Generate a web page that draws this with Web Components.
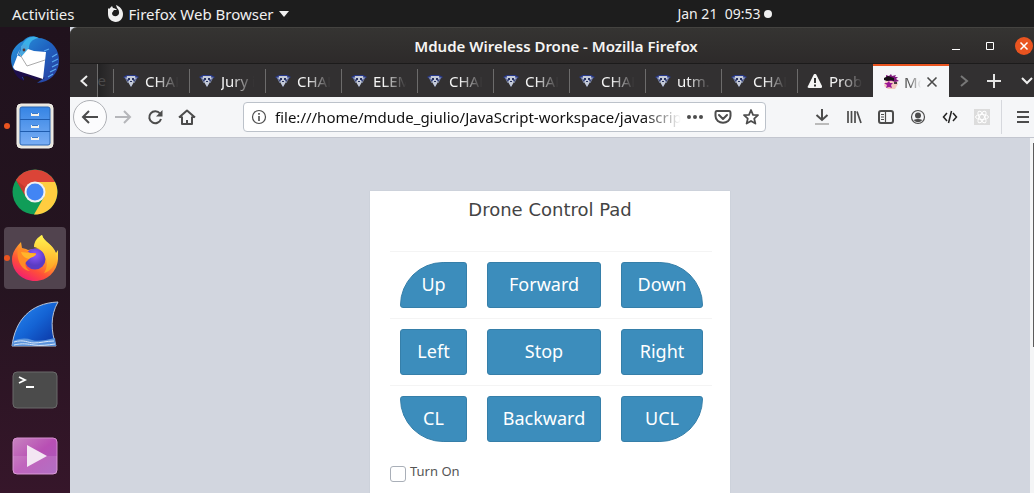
<!DOCTYPE html>
<html lang="en">
<head>
<meta charset="utf-8">
<title>Mdude Wireless Drone</title>
<style>
  html, body { margin: 0; height: 100%; }
  body { font: 15px/20px "Noto Sans", "Open Sans", sans-serif; overflow: hidden; }
</style>
</head>
<body>
<desktop-shell>
  <top-bar slot="top"></top-bar>
  <app-dock slot="dock"></app-dock>
  <browser-window>
    <drone-pad></drone-pad>
  </browser-window>
</desktop-shell>

<script>
const define = (name, html, setup) => {
  const template = document.createElement('template');
  template.innerHTML = html;
  customElements.define(name, class extends HTMLElement {
    connectedCallback() {
      if (this.shadowRoot) return;
      const root = this.attachShadow({ mode: 'open' });
      root.append(template.content.cloneNode(true));
      if (setup) setup(this, root);
    }
  });
};

define('desktop-shell', `
<style>
  :host { display: flex; flex-direction: column; height: 100vh; background: #24131f; }
  .main { flex: 1; display: flex; min-height: 0; }
</style>
<slot name="top"></slot>
<div class="main"><slot name="dock"></slot><slot></slot></div>`);

define('top-bar', `
<style>
  :host { display: grid; grid-template-columns: 8fr auto 3fr; align-items: center; height: 27px; padding: 0 12px;
    background: #1d1d1d; color: #f0f0f0; }
  nav { display: flex; align-items: center; gap: 32px; }
  button { all: unset; display: flex; align-items: center; white-space: pre; }
  .app { gap: 5px; }
  .clock { gap: 4px; font-size: 14px; }
</style>
<nav>
  <button>Activities</button>
  <button class="app">
    <svg width="17" height="17" viewBox="0 0 17 17" fill="#f0f0f0"><path fill-rule="evenodd" d="M1 3l1 1 3-3 1 2c2 0 3 1 4 2H7l-2 3c0 5 8 4 7-1 0-2-1-3-2-4L9 0c3 1 7 4 7 9 0 11-15 10-15 0z"/></svg>
    <span>Firefox Web Browser</span>
    <svg width="10" height="6" fill="#f0f0f0"><path d="M0 0h10L5 6z"/></svg>
  </button>
</nav>
<button class="clock">Jan 21  09:53<svg width="8" height="8"><circle cx="4" cy="4" r="4" fill="#f0f0f0"/></svg></button>`);

define('dock-item', `
<style>
  :host { display: flex; position: relative; align-items: center; justify-content: center; height: 62px; border-radius: 4px; }
  :host([active]) { background: #51434e; }
  :host([running])::before { content: ""; position: absolute; left: 0; width: 6px; height: 6px; border-radius: 50%; background: #e95420; }
</style>
<slot></slot>`);

define('app-dock', `
<style>
  :host { display: flex; flex: none; flex-direction: column; gap: 4px; box-sizing: border-box; width: 70px; padding: 2px 4px; overflow: hidden;
    background: linear-gradient(#20121d, #251420 55%, #36162a); }
  svg { display: block; }
</style>
<dock-item><svg width="48" height="48" viewBox="0 0 48 48">
  <defs><linearGradient id="b" x2="1" y2="1"><stop stop-color="#2a9adf"/><stop offset=".5" stop-color="#1f62c0"/><stop offset="1" stop-color="#2b3a9c"/></linearGradient></defs>
  <path fill="url(#b)" d="M12 5C16 0 23-1 27 2c10 0 20 8 21 20 1 13-7 24-22 25l7-5-9 0-8-3-5 0 2 5C5 40 0 32 0 23 0 15 5 8 12 5z"/>
  <path fill="#3ab0e8" d="M11 10C14 2 21-1 28 2c-8 1-10 6-10 10l-7 8-3-2 2-3z"/>
  <path fill="#1d0e4b" d="M2 33l32 9-9 2-9-4-5 1 2 4C7 43 4 38 2 33z"/>
  <path fill="#fff" d="M9 13l-7 18 2 3 28 9 3-27-12-1-6-2-7 8-4-2z"/>
  <path fill="none" stroke="#aaa" d="M8 17l8 13 18-6"/>
  <path fill="#4aa6df" d="M10 10l4-2 3 3-6 8-3-1 2-4z"/><circle cx="13" cy="14" r="1.4" fill="#533"/>
  <path fill="none" stroke="#5aaaf0" stroke-width="1.2" d="M46 18l-5 3M47 23l-6 3M47 28l-6 3M45 33l-6 3M42 38l-5 3M38 13l-5 2"/>
</svg></dock-item>
<dock-item running><svg width="38" height="46" viewBox="0 0 38 46">
  <defs><linearGradient id="f" y2="1" x2="0"><stop stop-color="#3584e4"/><stop offset="1" stop-color="#7aaef4"/></linearGradient></defs>
  <rect x="1" y="1" width="36" height="44" rx="4" fill="#e8e5dd" stroke="#f4f2ec"/>
  <rect x="4" y="4" width="30" height="38" rx="2" fill="url(#f)" stroke="#2a66b4"/>
  <path stroke="#1f5cae" d="M4 16.500h30M4 28.500h30"/>
  <path stroke="#f4f2ec" stroke-width="3" d="M15 11.500h8M15 23.500h8M15 35.500h8"/><path stroke="#3a78c8" d="M16 10.500h6M16 22.500h6M16 34.500h6"/>
</svg></dock-item>
<dock-item><svg width="46" height="46" viewBox="0 0 46 46">
  <circle cx="23" cy="23" r="22.500" fill="#109d58"/>
  <path fill="#db4437" d="M4 11A22.500 22.500 0 0 1 43 13H23l-9 15z"/>
  <path fill="#ffcd40" d="M43 13A22.500 22.500 0 0 1 22 45.500L32 28l0-10-9-5z"/>
  <path fill="#b4342c" opacity=".6" d="M4 11l9 7-1 7z"/>
  <circle cx="23" cy="23" r="10.500" fill="#f1f1f1"/><circle cx="23" cy="23" r="8.500" fill="#4285f4"/>
</svg></dock-item>
<dock-item running active><svg width="46" height="48" viewBox="0 0 46 48">
  <defs>
    <linearGradient id="x" x1=".8" y1="0" x2=".2" y2="1"><stop offset=".1" stop-color="#fff44f"/><stop offset=".4" stop-color="#ffa82a"/><stop offset=".7" stop-color="#ff5038"/><stop offset="1" stop-color="#f0147c"/></linearGradient>
    <linearGradient id="y" x2="0" y2="1"><stop stop-color="#fff44f"/><stop offset="1" stop-color="#ff9c20"/></linearGradient>
    <radialGradient id="p" cy=".3"><stop stop-color="#9059ff"/><stop offset="1" stop-color="#5b3cc4"/></radialGradient>
  </defs>
  <path fill="url(#x)" d="M9 8l1 6 4 1 2 1 12-2C24 9 27 4 30 1c2 7 11 9 14 18l2-3c1 4 0 9 0 9-1 13-11 22-23 22S0 38 0 25C0 19 4 13 9 8z"/>
  <circle cx="23" cy="25" r="10.500" fill="url(#p)"/>
  <path fill="url(#y)" d="M22 13c0-6 4-10 8-12 1 7 10 9 13 17 3 10-3 19-11 21 3-4 4-11 1-16-1-5-5-9-11-10z"/>
  <path fill="#ff8a26" d="M6 14l8 2 4 3 6 0c0 3-4 4-6 5l-3 3c-3 2-2 7 3 10-10-1-14-13-12-23z"/>
  <path fill="#ffb52b" d="M9 18l9 1 6 1c-1 3-5 3-7 5-4-1-7-3-8-7z"/>
</svg></dock-item>
<dock-item><svg width="48" height="46" viewBox="0 0 48 46">
  <defs><linearGradient id="w" x2="1" y2="1"><stop stop-color="#2a8cf4"/><stop offset=".5" stop-color="#1463d4"/><stop offset="1" stop-color="#0a2e9c"/></linearGradient></defs>
  <path fill="url(#w)" stroke="#b9c4d6" d="M1 45C4 20 19 2 47 1c-8 14-7 29-2 44z"/>
  <path fill="#5a93dc" d="M2 40c8-3 13-3 19-1s14 0 23-2l1 8H1z"/>
  <path fill="none" stroke="#dbe8f8" d="M3 41c10-3 14 1 20 1s13-2 20-2M3 44c8-2 14-1 20 0s14 0 21-1"/>
</svg></dock-item>
<dock-item><svg width="46" height="38" viewBox="0 0 46 38">
  <rect x="1" y="1" width="44" height="36" rx="4" fill="#4b4b4b" stroke="#6a6a6a"/>
  <path fill="none" stroke="#fff" stroke-width="1.800" d="M7 6l6 3-6 3M14 16h8"/>
</svg></dock-item>
<dock-item><svg width="46" height="38" viewBox="0 0 46 38">
  <defs><linearGradient id="v" x2="1" y2="1"><stop stop-color="#c884c0"/><stop offset=".5" stop-color="#b84fb4"/><stop offset="1" stop-color="#a65cbc"/></linearGradient></defs>
  <rect x="1" y="1" width="44" height="36" rx="4" fill="url(#v)" stroke="#d68fd0"/>
  <path fill="#fff" opacity=".12" d="M1 19h44v18H1z"/><path fill="#f3e6f3" d="M15 8v22l20-11z"/>
</svg></dock-item>`);

define('browser-window', `
<style>
  :host { flex: 1; min-width: 0; display: flex; flex-direction: column; background: #d2d6df; }
  title-bar, tab-strip, nav-bar { flex: none; }
  .page { flex: 1; min-height: 0; display: flex; }
  .view { flex: 1; overflow: hidden; display: flex; justify-content: center; align-items: flex-start; padding-top: 53px; }
  .scroll { width: 4px; background: #f4f5f6; display: flex; flex-direction: column; }
  .scroll::before { content: ""; margin: 5px 0 0 3px; height: 204px; background: #5c5c5c; }
</style>
<title-bar>Mdude Wireless Drone - Mozilla Firefox</title-bar>
<tab-strip></tab-strip>
<nav-bar></nav-bar>
<div class="page"><div class="view"><slot></slot></div><div class="scroll"></div></div>`);

define('title-bar', `
<style>
  :host { display: grid; grid-template-columns: 1fr auto 1fr; align-items: center; box-sizing: border-box; height: 37px;
    background: linear-gradient(#353432, #2d2a2a); border-top: 1px solid #444340; border-bottom: 1px solid #1c1b1b; border-radius: 7px 0 0 0; color: #f6f5f4; }
  h1 { grid-column: 2; margin: 0 0 0 8px; font-size: 15px; font-weight: 600; line-height: 20px; white-space: nowrap; }
  .controls { display: flex; justify-content: flex-end; align-items: center; gap: 14px; }
  button { all: unset; display: flex; justify-content: center; width: 20px; }
</style>
<h1><slot></slot></h1>
<div class="controls">
  <button aria-label="Minimize"><svg width="10" height="10"><path d="M1 8.500h8" stroke="#fff"/></svg></button>
  <button aria-label="Maximize"><svg width="10" height="10"><path d="M1.500 1.500h7v7h-7z" fill="none" stroke="#fff"/></svg></button>
  <button aria-label="Close"><svg width="20" height="20"><circle cx="10" cy="10" r="9" fill="#e95420"/><path d="M6.500 6.500l7 7m0-7l-7 7" stroke="#fff" stroke-width="1.500"/></svg></button>
</div>`);

define('browser-tab', `
<style>
  :host { display: flex; flex: none; box-sizing: border-box; width: 76px; height: 33px; align-items: center; gap: 5px; padding: 0 9px; color: #f4f4f4; position: relative; }
  :host(:not([selected]))::before { content: ""; position: absolute; left: 0; top: 5px; bottom: 4px; width: 1px; background: #6c6b6b; }
  :host([selected]) { background: #f5f6f8; border-top: 2px solid #e95420; padding-right: 11px; gap: 4px; color: #555; }
  .icon { flex: none; width: 18px; height: 16px; display: flex; justify-content: center; }
  .label { flex: 1; min-width: 0; overflow: hidden; white-space: nowrap; -webkit-mask-image: linear-gradient(90deg, #000 30%, #0000 95%); mask-image: linear-gradient(90deg, #000 30%, #0000 95%); }
  button { all: unset; display: none; }
  :host([selected]) button { display: flex; }
</style>
<span class="icon"></span><span class="label"><slot></slot></span>
<button aria-label="Close tab"><svg width="12" height="12"><path d="M1.500 1.500l9 9m0-9l-9 9" stroke="#4a4a4a" stroke-width="1.600"/></svg></button>`,
(host, root) => {
  const icons = {
    crest: '<svg width="16" height="16" viewBox="0 0 16 16"><path fill="#28398c" d="M0 4l4-2h8l4 2-5 4-3 6-3-6z"/><path fill="#c4cad8" d="M4 3h8l1 3-3 1 1 2-3 5-3-5 1-2-3-1z"/><path fill="#28335f" d="M5 5h2v2H5zM9 5h2v2H9zM7 8h2v1H7z"/><path stroke="#7d89aa" d="M2 4l3 6M14 4l-3 6"/></svg>',
    warning: '<svg width="16" height="16" viewBox="0 0 16 16"><path fill="#f4f4f4" d="M8 1c1 0 1 0 2 2l5 10c0 1 0 2-1 2H2c-1 0-2-1-1-2L6 3c1-2 1-2 2-2z"/><path fill="#333" d="M7 5h2v5H7zM7 11.500h2v2H7z"/></svg>',
    face: '<svg width="16" height="16" viewBox="0 0 16 16"><path fill="#f3c8bf" d="M3 5h10l2 5-3 5H5l-4-3z"/><path fill="#81197f" d="M3 1l3 1 2-2 1 2 4-1-1 2 3 0-2 2 3 2-4 1-3-1-4 0-2-2z"/><path fill="#171117" d="M1 4l4-2 6 2 0 3-3-1-4 1-3-1z"/><path fill="#9c1696" d="M6 7l1 2 3 0-2 2 1 3-3-1-3 1 1-3-3-2h3z"/><path fill="#4a3a44" d="M11 8h3v2h-3z"/></svg>'
  };
  root.querySelector('.icon').innerHTML = icons[host.getAttribute('icon') || 'crest'];
});

define('tab-strip', `
<style>
  :host { display: flex; box-sizing: border-box; height: 33px; background: #323031; overflow: hidden; }
  button { all: unset; display: flex; flex: none; align-items: center; justify-content: center; width: 32px; }
  .prev { width: 27px; border-right: 1px solid #6c6b6b; }
  .cut { width: 8px; padding-right: 7px; flex: none; line-height: 33px; overflow: hidden; color: #4a494a; direction: rtl; background: linear-gradient(90deg, #242324, #323031); }
  .tabs { display: flex; flex: 1; min-width: 0; overflow: hidden; }
  .end { display: flex; flex: none; justify-content: flex-end; }
  .end button:first-child, .end button:nth-child(2) { width: 30px; }
  .end button:last-child { width: 25px; justify-content: flex-end; }
</style>
<button class="prev" aria-label="Scroll tabs left"><svg width="12" height="14"><path d="M9 2L3.500 7 9 12" fill="none" stroke="#eee" stroke-width="2"/></svg></button>
<div class="cut">e</div>
<div class="tabs">
  <browser-tab>CHAP</browser-tab><browser-tab>Jury i</browser-tab><browser-tab>CHAP</browser-tab><browser-tab>ELEM</browser-tab>
  <browser-tab>CHAP</browser-tab><browser-tab>CHAP</browser-tab><browser-tab>CHAP</browser-tab><browser-tab>utm.e</browser-tab>
  <browser-tab>CHAP</browser-tab><browser-tab icon="warning">Probl</browser-tab><browser-tab icon="face" selected>Md</browser-tab>
</div>
<div class="end">
  <button aria-label="Scroll tabs right"><svg width="12" height="14"><path d="M3 2l6 5-6 5" fill="none" stroke="#777" stroke-width="2"/></svg></button>
  <button aria-label="New tab"><svg width="14" height="14"><path d="M7 0v14M0 7h14" stroke="#e4e4e4" stroke-width="2"/></svg></button>
  <button aria-label="List all tabs"><svg width="14" height="14"><path d="M2 4l5 5 5-5" fill="none" stroke="#eee" stroke-width="2"/></svg></button>
</div>`);

define('nav-bar', `
<style>
  :host { display: flex; align-items: center; box-sizing: border-box; height: 41px; background: #f5f6f8; border-bottom: 1px solid #c3c6cf; padding-left: 3px; color: #4c4c4c; }
  button { all: unset; display: flex; flex: none; align-items: center; justify-content: center; width: 32px; height: 32px; }
  svg { display: block; fill: none; stroke: currentColor; stroke-width: 2; }
  .back { box-sizing: border-box; width: 34px; height: 34px; border: 1px solid #aeb0b5; border-radius: 50%; background: #fcfcfd; }
  .forward { color: #b5b6ba; }
  .field { flex: 1; min-width: 0; display: flex; align-items: center; box-sizing: border-box; height: 30px; margin: 0 40px; padding: 0 0 0 7px; border: 1px solid #bcc2ca; border-radius: 4px; background: #fff; }
  .field button { width: 28px; }
  .field .info { width: 16px; }
  input { flex: 1; min-width: 0; border: 0; padding: 0; margin: 0 0 0 8px; outline: 0; background: none; font: inherit; color: #111; height: 24px;
    -webkit-mask-image: linear-gradient(90deg, #000 calc(100% - 38px), #0000); mask-image: linear-gradient(90deg, #000 calc(100% - 38px), #0000); }
  .rule { width: 1px; height: 34px; margin-left: 3px; background: #d6d8dd; }
  .menu { justify-content: flex-end; width: 32px; padding-right: 5px; box-sizing: border-box; }
</style>
<button class="back" aria-label="Back"><svg width="18" height="16"><path d="M17 8H2M8 2L2 8l6 6"/></svg></button>
<button class="forward" aria-label="Forward"><svg width="18" height="16"><path d="M1 8h15M10 2l6 6-6 6"/></svg></button>
<button aria-label="Reload"><svg width="16" height="16"><path d="M13 4.500A6 6 0 1 0 14 10"/><path d="M15.500 1v6.500H9z" fill="currentColor" stroke="none"/></svg></button>
<button aria-label="Home"><svg width="18" height="16"><path d="M1 8.500L9 1.500l8 7M4 7.500V15h10V7.500M9 15v-4" stroke-linejoin="round"/></svg></button>
<div class="field">
  <button class="info" aria-label="Site information"><svg width="16" height="16"><circle cx="8" cy="8" r="6.500" stroke-width="1.200"/><path d="M8 7v5M8 4v1.800" stroke-width="1.600"/></svg></button>
  <input aria-label="Address" value="file:///home/mdude_giulio/JavaScript-workspace/javascript/index.html">
  <button aria-label="Page actions"><svg width="18" height="6"><g fill="currentColor" stroke="none"><circle cx="3" cy="3" r="2"/><circle cx="9" cy="3" r="2"/><circle cx="15" cy="3" r="2"/></g></svg></button>
  <button aria-label="Save to Pocket"><svg width="18" height="16"><path d="M3 2h12q1.500 0 1.500 2v3c0 9-15 9-15 0V4Q1.500 2 3 2zM5 6l4 4 4-4" stroke-linecap="round" stroke-linejoin="round"/></svg></button>
  <button aria-label="Bookmark"><svg width="18" height="18"><path d="M9 2l2 4.800 5 .4-3.800 3.400 1.200 5L9 13l-4.400 2.600 1.200-5L2 7.200l5-.4z" stroke-width="1.800" stroke-linejoin="round"/></svg></button>
</div>
<button aria-label="Downloads"><svg width="16" height="18"><path d="M8 1v11M2.500 7L8 12l5.500-5"/><path d="M1 16h14" stroke="#bbb"/></svg></button>
<button aria-label="Library"><svg width="16" height="16"><path d="M2 2v12M5.500 2v12M9 2v12M11 2.500l4 11.500" stroke-width="1.700"/></svg></button>
<button aria-label="Sidebars"><svg width="18" height="16"><rect x="2" y="2" width="14" height="12" rx="2"/><path d="M8.500 2v12M4 5.500h3M4 8h3M4 10.500h3" stroke-width="1.200"/></svg></button>
<button aria-label="Account"><svg width="16" height="16"><circle cx="8" cy="8" r="6.500" stroke-width="1.200"/><circle cx="8" cy="6.500" r="3" fill="currentColor" stroke="none"/><path d="M3.500 11q4.500-2 9 0-4.500 4.500-9 0z" fill="currentColor" stroke="none"/></svg></button>
<button aria-label="Web developer"><svg width="16" height="16"><path d="M5 4L1.500 8 5 12M11 4l3.500 4-3.500 4M9.500 2l-3 12" stroke-width="1.500" stroke="#222"/></svg></button>
<button aria-label="React Developer Tools"><svg width="16" height="16"><path d="M0 0h16v16H0z" fill="#dcdcdc" stroke="none"/><g stroke="#fff" stroke-width="1"><ellipse cx="8" cy="8" rx="6.500" ry="2.500"/><ellipse cx="8" cy="8" rx="6.500" ry="2.500" transform="rotate(60 8 8)"/><ellipse cx="8" cy="8" rx="6.500" ry="2.500" transform="rotate(120 8 8)"/></g></svg></button>
<span class="rule"></span>
<button class="menu" aria-label="Open menu"><svg width="12" height="14"><path d="M0 2h12M0 7h12M0 12h12"/></svg></button>`);

define('pad-button', `
<style>
  :host { display: block; }
  button { display: block; box-sizing: border-box; width: 100%; height: 46px; border: 1px solid #367fa9; border-radius: var(--corners, 3px); padding: 0 0 2px; background: #3c8dbc; color: #fff; font: inherit; font-size: 18px; line-height: 24px; }
</style>
<button type="button"><slot></slot></button>`,
(host, root) => {
  const corner = { tl: '45px 3px 3px', tr: '3px 45px 3px 3px', br: '3px 3px 45px', bl: '3px 3px 3px 45px' }[host.getAttribute('round')];
  if (corner) root.querySelector('button').style.setProperty('--corners', corner);
});

define('drone-pad', `
<style>
  :host { display: block; box-sizing: border-box; width: 360px; padding-bottom: 80px; background: #fff; color: #444; box-shadow: 0 0 1px #b8bdc8; }
  h2 { margin: 0; padding: 8px 0 31px; font: 400 18px/21px "DejaVu Sans", sans-serif; text-align: center; }
  .row { display: grid; grid-template-columns: 67fr 114fr 82fr; gap: 20px; margin: 0 18px 0 20px; padding: 10px 9px 10px 10px; border-top: 1px solid #f4f4f4; }
  label { display: flex; gap: 4px; padding: 10px 20px 0; font-size: 13px; line-height: 18px; color: #555; }
  input { appearance: none; box-sizing: border-box; width: 16px; height: 16px; margin: 4px 0 0; border: 1px solid #a9afb8; border-radius: 3px; background: #fff; }
</style>
<h2>Drone Control Pad</h2>
<div class="row"><pad-button round="tl">Up</pad-button><pad-button>Forward</pad-button><pad-button round="tr">Down</pad-button></div>
<div class="row"><pad-button>Left</pad-button><pad-button>Stop</pad-button><pad-button>Right</pad-button></div>
<div class="row"><pad-button round="bl">CL</pad-button><pad-button>Backward</pad-button><pad-button round="br">UCL</pad-button></div>
<label><input type="checkbox">Turn On</label>`);
</script>
</body>
</html>
